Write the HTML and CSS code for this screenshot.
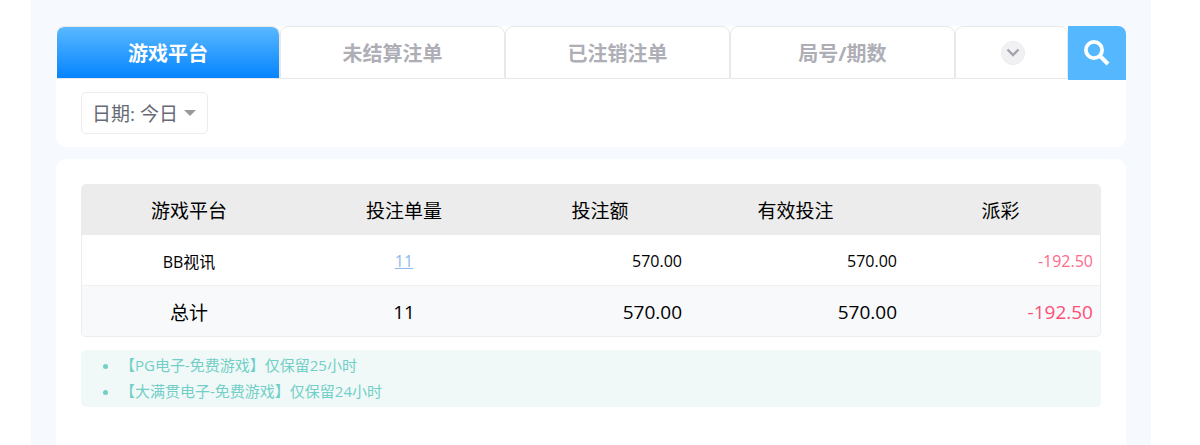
FILE: index.html
```html
<!DOCTYPE html>
<html lang="zh-CN">
<head>
<meta charset="utf-8">
<title>投注记录</title>
<link rel="stylesheet" href="styles.css">
</head>
<body>
<main class="page">
  <section class="card card-top">
    <div class="tabs">
      <div class="tab tab-active">游戏平台</div>
      <div class="tab">未结算注单</div>
      <div class="tab">已注销注单</div>
      <div class="tab">局号/期数</div>
      <div class="tab tab-more">
        <span class="more-circle">
          <svg width="14" height="9" viewBox="0 0 14 9"><path d="M1.500 1.500 7 7l5.500-5.500" fill="none" stroke="#a4a4b0" stroke-width="2.400"/></svg>
        </span>
      </div>
      <div class="search">
        <svg width="26" height="26" viewBox="0 0 26 26"><circle cx="10" cy="10" r="8.100" fill="none" stroke="#fff" stroke-width="3.800"/><path d="M15.500 15.500l8.500 8.500" fill="none" stroke="#fff" stroke-width="4"/></svg>
      </div>
    </div>
    <div class="filter">
      <div class="date-btn">日期: 今日<span class="caret"></span></div>
    </div>
  </section>
  <section class="card card-main">
    <table class="report">
      <colgroup>
        <col class="c1"><col class="c2"><col class="c3"><col class="c4"><col class="c5">
      </colgroup>
      <thead>
        <tr><th>游戏平台</th><th>投注单量</th><th>投注额</th><th>有效投注</th><th>派彩</th></tr>
      </thead>
      <tbody>
        <tr class="row">
          <td class="center">BB视讯</td>
          <td class="center"><a class="link" href="#">11</a></td>
          <td class="num">570.00</td>
          <td class="num">570.00</td>
          <td class="num neg">-192.50</td>
        </tr>
        <tr class="total">
          <td class="center">总计</td>
          <td class="center">11</td>
          <td class="num">570.00</td>
          <td class="num">570.00</td>
          <td class="num neg">-192.50</td>
        </tr>
      </tbody>
    </table>
    <ul class="notice">
      <li>【PG电子-免费游戏】仅保留25小时</li>
      <li>【大满贯电子-免费游戏】仅保留24小时</li>
    </ul>
  </section>
</main>
</body>
</html>
```
FILE: styles.css
```css
* { box-sizing: border-box; }
html, body { margin: 0; padding: 0; height: 445px; overflow: hidden; background: #fff; }
body { font-family: "Open Sans", "Noto Sans CJK SC", sans-serif; color: #000; }
.page {
  width: 1120px;
  height: 445px;
  margin-left: 31px;
  padding: 26px 25px 0;
  background: #f6f9fe;
  overflow: hidden;
}
.card { background: #fff; border-radius: 10px; }
.card-top { height: 121px; }
.tabs { display: flex; height: 54px; align-items: flex-start; }
.tab {
  width: 225px;
  height: 53px;
  border: 1px solid #e8e8e8;
  border-radius: 8px 8px 0 0;
  display: flex;
  align-items: center;
  justify-content: center;
  font-size: 20px;
  font-weight: 700;
  color: #aeaeb6;
  background: #fff;
}
.tab-active {
  width: 224px;
  border-left-color: transparent;
  border-bottom-color: #e8e8e8;
  background: linear-gradient(#59b8ff, #0584ff) padding-box;
  color: #fff;
}
.tab-more { width: 113px; padding-left: 3px; }
.more-circle {
  width: 24px;
  height: 24px;
  border-radius: 50%;
  background: #f1f1f3;
  border: 1px solid #ebebed;
  display: flex;
  align-items: center;
  justify-content: center;
}
.search {
  width: 58px;
  height: 54px;
  background: #55b8ff;
  border-radius: 0 8px 0 0;
  display: flex;
  align-items: center;
  justify-content: center;
}
.filter { padding: 12px 25px 0; }
.date-btn {
  display: inline-flex;
  align-items: center;
  width: 127px;
  height: 42px;
  padding-left: 10px;
  border: 1px solid #ececec;
  border-radius: 5px;
  font-size: 19px;
  color: #666a75;
  white-space: nowrap;
}
.caret {
  margin-left: 6px;
  border-left: 6px solid transparent;
  border-right: 6px solid transparent;
  border-top: 6px solid #999;
}
.card-main { margin-top: 12px; height: 320px; padding: 25px; }
.report {
  width: 1020px;
  table-layout: fixed;
  border-collapse: separate;
  border-spacing: 0;
  border: 1px solid #ececec;
  border-top: 0;
  border-radius: 5px;
  overflow: hidden;
}
.c1 { width: 214px; }
.c2 { width: 216px; }
.c3 { width: 178px; }
.c4 { width: 215px; }
.c5 { width: 195px; }
th {
  height: 51px;
  padding: 0;
  background: #ececec;
  font-size: 19px;
  font-weight: 400;
  text-align: center;
}
th:nth-child(3) { padding-right: 2px; }
th:nth-child(n+4) { padding-right: 4px; }
td { padding: 0 8px; }
td:last-child { padding-right: 7px; }
.row td { height: 50px; padding-top: 2px; font-size: 16px; }
.total td { height: 51px; padding-top: 1px; font-size: 19px; background: #f8f9fb; border-top: 1px solid #f0f0f0; }
.center { text-align: center; }
.num { text-align: right; }
.link { color: #8fb9ee; text-decoration: underline; }
.neg { color: #ff4d75; }
.row .neg { color: #ff6a88; }
.notice {
  margin: 13px 0 0;
  height: 57px;
  padding: 2px 0 0 39px;
  background: #f0f9f7;
  border-radius: 5px;
  list-style: disc;
  color: #72cfc8;
  font-size: 15px;
  line-height: 26px;
}
```
